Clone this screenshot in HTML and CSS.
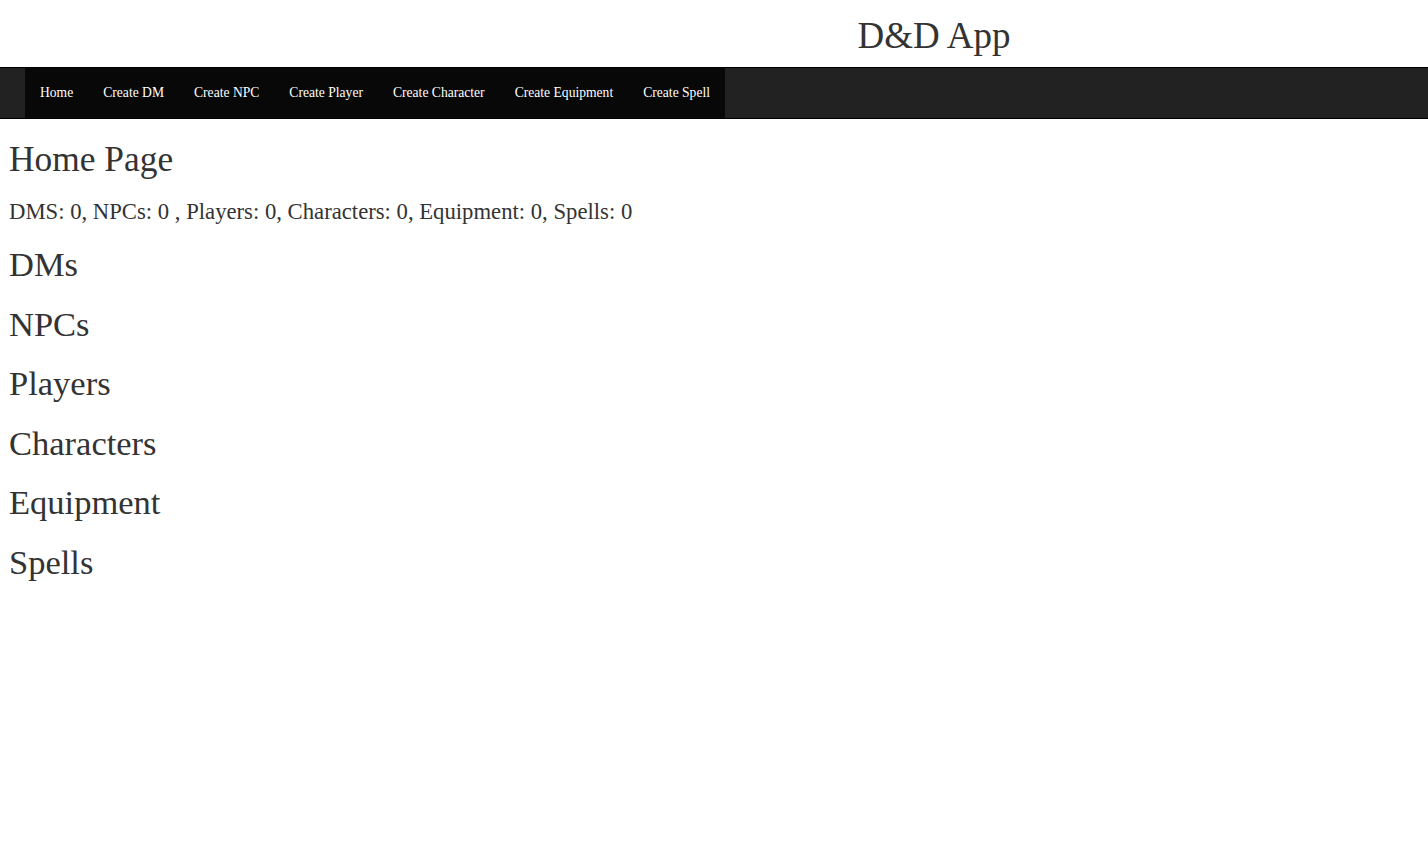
FILE: index.html
```html
<!DOCTYPE html>
<html>
<head>
<meta charset="utf-8">
<title>D&amp;D App</title>
<link rel="stylesheet" href="styles.css">
</head>
<body>
<header class="top">
  <h1 class="app-title">D&amp;D App</h1>
</header>
<nav class="navbar">
  <ul class="nav-list">
    <li><a href="#">Home</a></li>
    <li><a href="#">Create DM</a></li>
    <li><a href="#">Create NPC</a></li>
    <li><a href="#">Create Player</a></li>
    <li><a href="#">Create Character</a></li>
    <li><a href="#">Create Equipment</a></li>
    <li><a href="#">Create Spell</a></li>
  </ul>
</nav>
<main class="content">
  <h2 class="page-title">Home Page</h2>
  <p class="stats">DMS: 0, NPCs: 0 , Players: 0, Characters: 0, Equipment: 0, Spells: 0</p>
  <h3 class="section">DMs</h3>
  <h3 class="section">NPCs</h3>
  <h3 class="section">Players</h3>
  <h3 class="section">Characters</h3>
  <h3 class="section">Equipment</h3>
  <h3 class="section">Spells</h3>
</main>
</body>
</html>
```

FILE: styles.css
```css
* { box-sizing: border-box; }
body {
  margin: 0;
  font-family: "Liberation Serif", "DejaVu Serif", serif;
  color: #333;
  background: #fff;
}
.top {
  height: 67px;
  display: flex;
  justify-content: center;
  align-items: center;
  padding-left: 440px;
  padding-top: 4px;
}
.app-title {
  margin: 0;
  font-weight: normal;
  font-size: 37px;
  color: #333;
}
.navbar {
  background: #222;
  border-top: 1px solid #000;
  border-bottom: 1px solid #000;
  height: 52px;
  padding-left: 25px;
  display: flex;
}
.nav-list {
  list-style: none;
  margin: 0;
  padding: 0;
  display: flex;
  background: #080808;
}
.nav-list li { display: flex; }
.nav-list a {
  color: #fff;
  text-decoration: none;
  font-size: 13.6px;
  padding: 0 15px;
  display: flex;
  align-items: center;
}
.content {
  padding: 0 9px;
}
.page-title {
  margin: 20px 0 0;
  font-weight: normal;
  font-size: 35.4px;
  line-height: 40px;
}
.stats {
  margin: 19px 0 0;
  font-size: 22.7px;
  line-height: 28px;
}
.section {
  margin: 0;
  font-weight: normal;
  font-size: 34.5px;
  line-height: 59.6px;
}
.stats + .section { margin-top: 9px; }
```
